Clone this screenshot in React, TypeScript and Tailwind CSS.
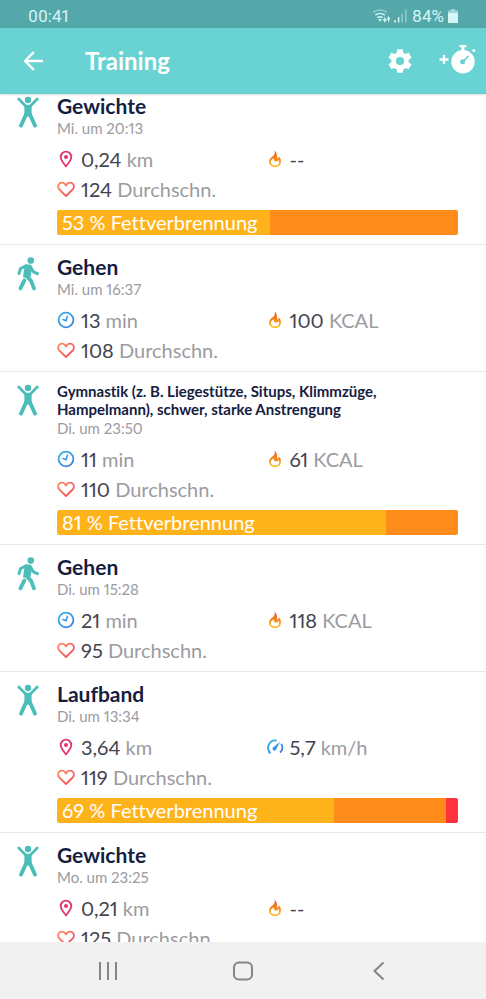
import type { ReactNode } from "react";

type Metric = { icon: "pin" | "clock" | "flame" | "speed" | "heart"; value: string; unit?: string };

type Workout = {
  title: string;
  date: string;
  activity: "workout" | "walk";
  compact?: boolean;
  metrics: Metric[];
  zones?: { label: string; parts: number[] };
};

const WORKOUTS: Workout[] = [
  {
    title: "Gewichte",
    date: "Mi. um 20:13",
    activity: "workout",
    metrics: [
      { icon: "pin", value: "0,24", unit: "km" },
      { icon: "flame", value: "--" },
      { icon: "heart", value: "124", unit: "Durchschn." },
    ],
    zones: { label: "53 % Fettverbrennung", parts: [53, 47] },
  },
  {
    title: "Gehen",
    date: "Mi. um 16:37",
    activity: "walk",
    metrics: [
      { icon: "clock", value: "13", unit: "min" },
      { icon: "flame", value: "100", unit: "KCAL" },
      { icon: "heart", value: "108", unit: "Durchschn." },
    ],
  },
  {
    title: "Gymnastik (z. B. Liegestütze, Situps, Klimmzüge, Hampelmann), schwer, starke Anstrengung",
    date: "Di. um 23:50",
    activity: "workout",
    compact: true,
    metrics: [
      { icon: "clock", value: "11", unit: "min" },
      { icon: "flame", value: "61", unit: "KCAL" },
      { icon: "heart", value: "110", unit: "Durchschn." },
    ],
    zones: { label: "81 % Fettverbrennung", parts: [82, 18] },
  },
  {
    title: "Gehen",
    date: "Di. um 15:28",
    activity: "walk",
    metrics: [
      { icon: "clock", value: "21", unit: "min" },
      { icon: "flame", value: "118", unit: "KCAL" },
      { icon: "heart", value: "95", unit: "Durchschn." },
    ],
  },
  {
    title: "Laufband",
    date: "Di. um 13:34",
    activity: "workout",
    metrics: [
      { icon: "pin", value: "3,64", unit: "km" },
      { icon: "speed", value: "5,7", unit: "km/h" },
      { icon: "heart", value: "119", unit: "Durchschn." },
    ],
    zones: { label: "69 % Fettverbrennung", parts: [69, 28, 3] },
  },
  {
    title: "Gewichte",
    date: "Mo. um 23:25",
    activity: "workout",
    metrics: [
      { icon: "pin", value: "0,21", unit: "km" },
      { icon: "flame", value: "--" },
      { icon: "heart", value: "125", unit: "Durchschn." },
    ],
  },
];

const ZONE_COLORS = ["bg-[#ffb31a]", "bg-[#ff8c1a]", "bg-[#ff333d]"];

/* ── Icons ──────────────────────────────────────────────────────────────── */

function WorkoutIcon() {
  return (
    <svg width="22" height="32" viewBox="0 0 22 32" fill="none" aria-hidden="true">
      <circle cx="11" cy="4" r="3.2" fill="#4dbdb9" />
      <path d="M1.8 3L8 9.400M20.2 3L14 9.400" stroke="#4dbdb9" strokeWidth="2.800" strokeLinecap="round" />
      <path d="M6.600 7.900L9 8.800h4l2.400-.9-.8 3.600v6.500l-3.600 3-3.600-3v-6.500z" fill="#4dbdb9" />
      <path d="M9.400 17.600L4 29.600M12.600 17.600L18 29.600" stroke="#4dbdb9" strokeWidth="3.800" strokeLinecap="round" />
    </svg>
  );
}

function WalkIcon() {
  return (
    <svg width="22" height="34" viewBox="0 0 22 34" fill="none" aria-hidden="true">
      <circle cx="13.800" cy="3.600" r="3.300" fill="#4dbdb9" />
      <path
        d="M8.400 8.200h3.600c1.400 0 2.300.9 2.600 2.200l-1.800 9.200-6 .2z"
        fill="#4dbdb9"
        stroke="#4dbdb9"
        strokeWidth="1.400"
        strokeLinejoin="round"
      />
      <path
        d="M9 8.900L3.600 11.500 2 16.600M13.600 10.200l2.800 4.600 4 1.800"
        stroke="#4dbdb9"
        strokeWidth="3"
        strokeLinecap="round"
        strokeLinejoin="round"
      />
      <path
        d="M9.200 18.600l4.800 5.200 3 7.600M7.400 23.400L3.400 31.400"
        stroke="#4dbdb9"
        strokeWidth="3.800"
        strokeLinecap="round"
        strokeLinejoin="round"
      />
    </svg>
  );
}

function MetricIcon({ name }: { name: Metric["icon"] }) {
  return (
    <svg className="shrink-0" width="18" height="18" viewBox="0 0 18 18" fill="none" aria-hidden="true">
      {name === "pin" && (
        <>
          <path
            d="M9 16.400C7 13.400 3.700 10.600 3.700 7a5.300 5.300 0 0 1 10.600 0c0 3.600-3.300 6.400-5.300 9.400z"
            stroke="#e0336f"
            strokeWidth="1.800"
            strokeLinejoin="round"
          />
          <circle cx="9" cy="7" r="2" fill="#e0336f" />
        </>
      )}
      {name === "clock" && (
        <>
          <circle cx="9" cy="9" r="7.400" stroke="url(#blue)" strokeWidth="1.800" />
          <path d="M10.400 5.200L9.100 9.700 6 8.600" stroke="url(#blue)" strokeWidth="1.600" strokeLinejoin="round" strokeLinecap="round" />
        </>
      )}
      {name === "heart" && (
        <path
          d="M9 16L2.300 9.500C.7 7.800.7 5.200 2.300 3.700 4 2 6.600 2.200 8 4l1 1.500L10 4c1.400-1.800 4-2 5.700-.3 1.600 1.500 1.600 4.100 0 5.800z"
          stroke="url(#coral)"
          strokeWidth="1.800"
          strokeLinejoin="round"
        />
      )}
      {name === "flame" && (
        <path
          fillRule="evenodd"
          d="M8.600.5c.3 2 .6 3-.8 4.700C6.400 6.800 3 8.200 3 11.500a6 5.700 0 0 0 12 0c0-2.200-.7-4-2.200-5-.1 1.100-.5 1.900-1.300 2.300C11.200 5.600 10.800 2.200 8.600.5zM7.600 8.300c0 1.500.3 2.900 1.700 3.200 1.500.3 2.700-.3 3.300-1.500.4.500.6 1 .6 1.700a4.200 3.700 0 0 1-8.400 0c0-1.600 1.600-2.100 2.800-3.400z"
          fill="url(#fire)"
        />
      )}
      {name === "speed" && (
        <>
          <path
            d="M4.200 14.600A7.200 7.200 0 0 1 10.600 2.500M2.400 14.700h2.400M15.300 5.800a7.200 7.200 0 0 1-1.300 8.800"
            stroke="url(#blue)"
            strokeWidth="1.800"
          />
          <path d="M7.600 9L14.300 3.400 10.300 11a1.900 1.900 0 1 1-2.700-2z" fill="url(#blue)" />
        </>
      )}
    </svg>
  );
}

/* Shared gradients for the metric icons */
function Gradients() {
  return (
    <svg width="0" height="0" className="absolute" aria-hidden="true">
      <defs>
        <linearGradient id="blue" gradientUnits="userSpaceOnUse" x1="2" y1="1" x2="14" y2="17">
          <stop stopColor="#35b5e5" />
          <stop offset="1" stopColor="#3f7fe0" />
        </linearGradient>
        <linearGradient id="coral" gradientUnits="userSpaceOnUse" x1="2" y1="2" x2="15" y2="15">
          <stop stopColor="#ff8a5c" />
          <stop offset="1" stopColor="#f0525f" />
        </linearGradient>
        <linearGradient id="fire" gradientUnits="userSpaceOnUse" x1="9" y1="0" x2="9" y2="17">
          <stop stopColor="#e8502f" />
          <stop offset="0.5" stopColor="#f5871f" />
          <stop offset="1" stopColor="#f7c325" />
        </linearGradient>
      </defs>
    </svg>
  );
}

/* ── Top bars ───────────────────────────────────────────────────────────── */

function StatusBar() {
  return (
    <div className="flex h-7 shrink-0 items-center justify-between bg-[#54a8aa] pt-1 pr-7 pl-7 font-[Roboto,sans-serif] text-[17px] leading-6 text-[#d5f6f6]">
      <span>00:41</span>
      <div className="flex items-center gap-1">
        <svg width="36" height="16" viewBox="0 0 36 16" fill="none" aria-hidden="true">
          <path d="M1 4.400a11 11 0 0 1 14 0" stroke="#8fcccd" strokeWidth="1.500" />
          <path d="M3.400 7.200a7.500 7.500 0 0 1 9.400 0M5.400 9.700a4.200 4.200 0 0 1 5.200 0" stroke="#d5f6f6" strokeWidth="1.500" />
          <circle cx="8" cy="12" r="1.300" fill="#d5f6f6" />
          <path d="M10.600 11h4.400l-2.200 3.600zM14.600 11.600h4L16.600 8z" fill="#d5f6f6" />
          <path d="M12.800 9v3M16.600 11v3" stroke="#d5f6f6" />
          <path d="M23 12v2.500M26.600 9v5.500" stroke="#d5f6f6" strokeWidth="1.500" />
          <path d="M30.200 5.500v9M33.800 1.500v13" stroke="#8fcccd" strokeWidth="1.500" />
        </svg>
        <span>84%</span>
        <svg width="10" height="14" viewBox="0 0 10 14" aria-hidden="true">
          <path d="M3 0h4v1.500h3V5H0V1.500h3z" fill="#9fd6d7" />
          <path d="M0 4h10v10H0z" fill="#d5f6f6" />
        </svg>
      </div>
    </div>
  );
}

function AppBar() {
  return (
    <header className="z-10 flex h-[66px] shrink-0 items-center bg-[#69d2d2] pr-2 pl-5 text-white shadow-[0_1px_2px_rgba(0,0,0,0.15)]">
      <button type="button" aria-label="Zurück" className="p-1">
        <svg width="20" height="20" viewBox="0 0 20 20" fill="none" aria-hidden="true">
          <path d="M9.800 1.200L1 10l8.800 8.800M1 10H19" stroke="currentColor" strokeWidth="2.400" strokeLinejoin="round" />
        </svg>
      </button>
      <h1 className="ml-[37px] flex-1 text-2xl leading-7 font-bold">Training</h1>
      <button type="button" aria-label="Einstellungen">
        <svg width="28" height="28" viewBox="0 0 24 24" fill="currentColor" aria-hidden="true">
          <path d="M19.430 12.980c.040-.320.070-.640.070-.980s-.030-.660-.070-.980l2.110-1.650c.190-.150.240-.420.120-.640l-2-3.460c-.120-.220-.390-.300-.610-.220l-2.490 1c-.520-.400-1.080-.730-1.690-.980l-.380-2.650A.488.488 0 0 0 14 2h-4c-.250 0-.460.180-.490.420l-.380 2.650c-.610.250-1.170.590-1.690.980l-2.490-1c-.230-.090-.490 0-.610.220l-2 3.460c-.130.220-.070.490.120.640l2.110 1.650c-.040.320-.070.650-.070.980s.030.660.070.980l-2.110 1.650c-.190.150-.240.420-.120.640l2 3.460c.120.220.390.300.610.220l2.490-1c.520.400 1.080.730 1.690.980l.380 2.650c.030.240.240.420.490.420h4c.250 0 .460-.180.490-.420l.380-2.650c.610-.250 1.170-.590 1.690-.980l2.490 1c.230.090.490 0 .610-.220l2-3.460c.120-.220.070-.490-.120-.640zM12 15.500a3.500 3.500 0 1 1 0-7 3.500 3.500 0 0 1 0 7z" />
        </svg>
      </button>
      <button type="button" aria-label="Training starten" className="ml-6">
        <svg width="40" height="32" viewBox="0 0 40 32" fill="none" aria-hidden="true">
          <path d="M1.500 14.500h9M6 10v9" stroke="currentColor" strokeWidth="2.400" />
          <circle cx="25" cy="16.800" r="11.700" fill="currentColor" />
          <path d="M21.500 0h7v2.200h-2v4h-3v-4h-2z" fill="currentColor" />
          <circle cx="35.800" cy="5.500" r="1.500" fill="currentColor" />
          <circle cx="24.600" cy="16.800" r="2.500" fill="#69d2d2" />
          <path d="M24.600 16.800l6-5.800" stroke="#69d2d2" strokeWidth="1.600" />
        </svg>
      </button>
    </header>
  );
}

/* ── Workout list ───────────────────────────────────────────────────────── */

function ZoneBar({ label, parts }: { label: string; parts: number[] }) {
  return (
    <div className="relative mt-1.5 mr-7 mb-[3px] flex h-[25px] overflow-hidden rounded-[2px]">
      {parts.map((part, i) => (
        <div key={i} className={ZONE_COLORS[i]} style={{ width: `${part}%` }} />
      ))}
      <span className="absolute left-[5px] text-xl leading-[25px] whitespace-nowrap text-white">{label}</span>
    </div>
  );
}

function WorkoutRow({ workout }: { workout: Workout }) {
  return (
    <li className="flex border-b border-[#e9e9ea] pt-2.5 pb-1.5">
      <div className="flex w-14 shrink-0 justify-center pt-[2px]">
        {workout.activity === "walk" ? <WalkIcon /> : <WorkoutIcon />}
      </div>
      <div className="ml-px min-w-0 flex-1">
        <h2
          className={
            workout.compact
              ? "mr-7 text-[15px] leading-[18px] font-bold text-[#15203f]"
              : "mr-7 text-[21px] leading-6 font-bold text-[#15203f]"
          }
        >
          {workout.title}
        </h2>
        <p className="text-[15px] leading-5 text-[#9b9ba1]">{workout.date}</p>
        <div className="mt-1.5 grid grid-cols-2 pr-3 text-xl leading-[30px]">
          {workout.metrics.map((m) => (
            <div key={m.icon} className="flex items-center gap-1.5">
              <MetricIcon name={m.icon} />
              <p className="whitespace-nowrap text-[#42434f]">
                {m.value}
                {m.unit && <span className="text-[#9b9ba1]"> {m.unit}</span>}
              </p>
            </div>
          ))}
        </div>
        {workout.zones && <ZoneBar {...workout.zones} />}
      </div>
    </li>
  );
}

/* ── System navigation ──────────────────────────────────────────────────── */

function NavButton({ label, children }: { label: string; children: ReactNode }) {
  return (
    <button type="button" aria-label={label} className="flex items-center justify-center">
      <svg width="20" height="20" viewBox="0 0 20 20" fill="none" stroke="#858585" strokeWidth="2" aria-hidden="true">
        {children}
      </svg>
    </button>
  );
}

export default function App() {
  return (
    <div className="flex h-screen flex-col overflow-hidden bg-white font-[Lato,sans-serif] proportional-nums [font-variant-ligatures:none]">
      <Gradients />
      <StatusBar />
      <AppBar />
      <main className="min-h-0 flex-1 overflow-hidden">
        <ul className="-mt-2.5">
          {WORKOUTS.map((w) => (
            <WorkoutRow key={w.date} workout={w} />
          ))}
        </ul>
      </main>
      <nav className="grid h-[57px] shrink-0 grid-cols-3 bg-[#f1f1f1] px-10">
        <NavButton label="Letzte Apps">
          <path d="M2 1v18M10 1v18M18 1v18" />
        </NavButton>
        <NavButton label="Startseite">
          <rect x="1" y="1.500" width="18" height="17" rx="5" />
        </NavButton>
        <NavButton label="Zurück">
          <path d="M15.500 1.500L6.500 10l9 8.500" />
        </NavButton>
      </nav>
    </div>
  );
}
